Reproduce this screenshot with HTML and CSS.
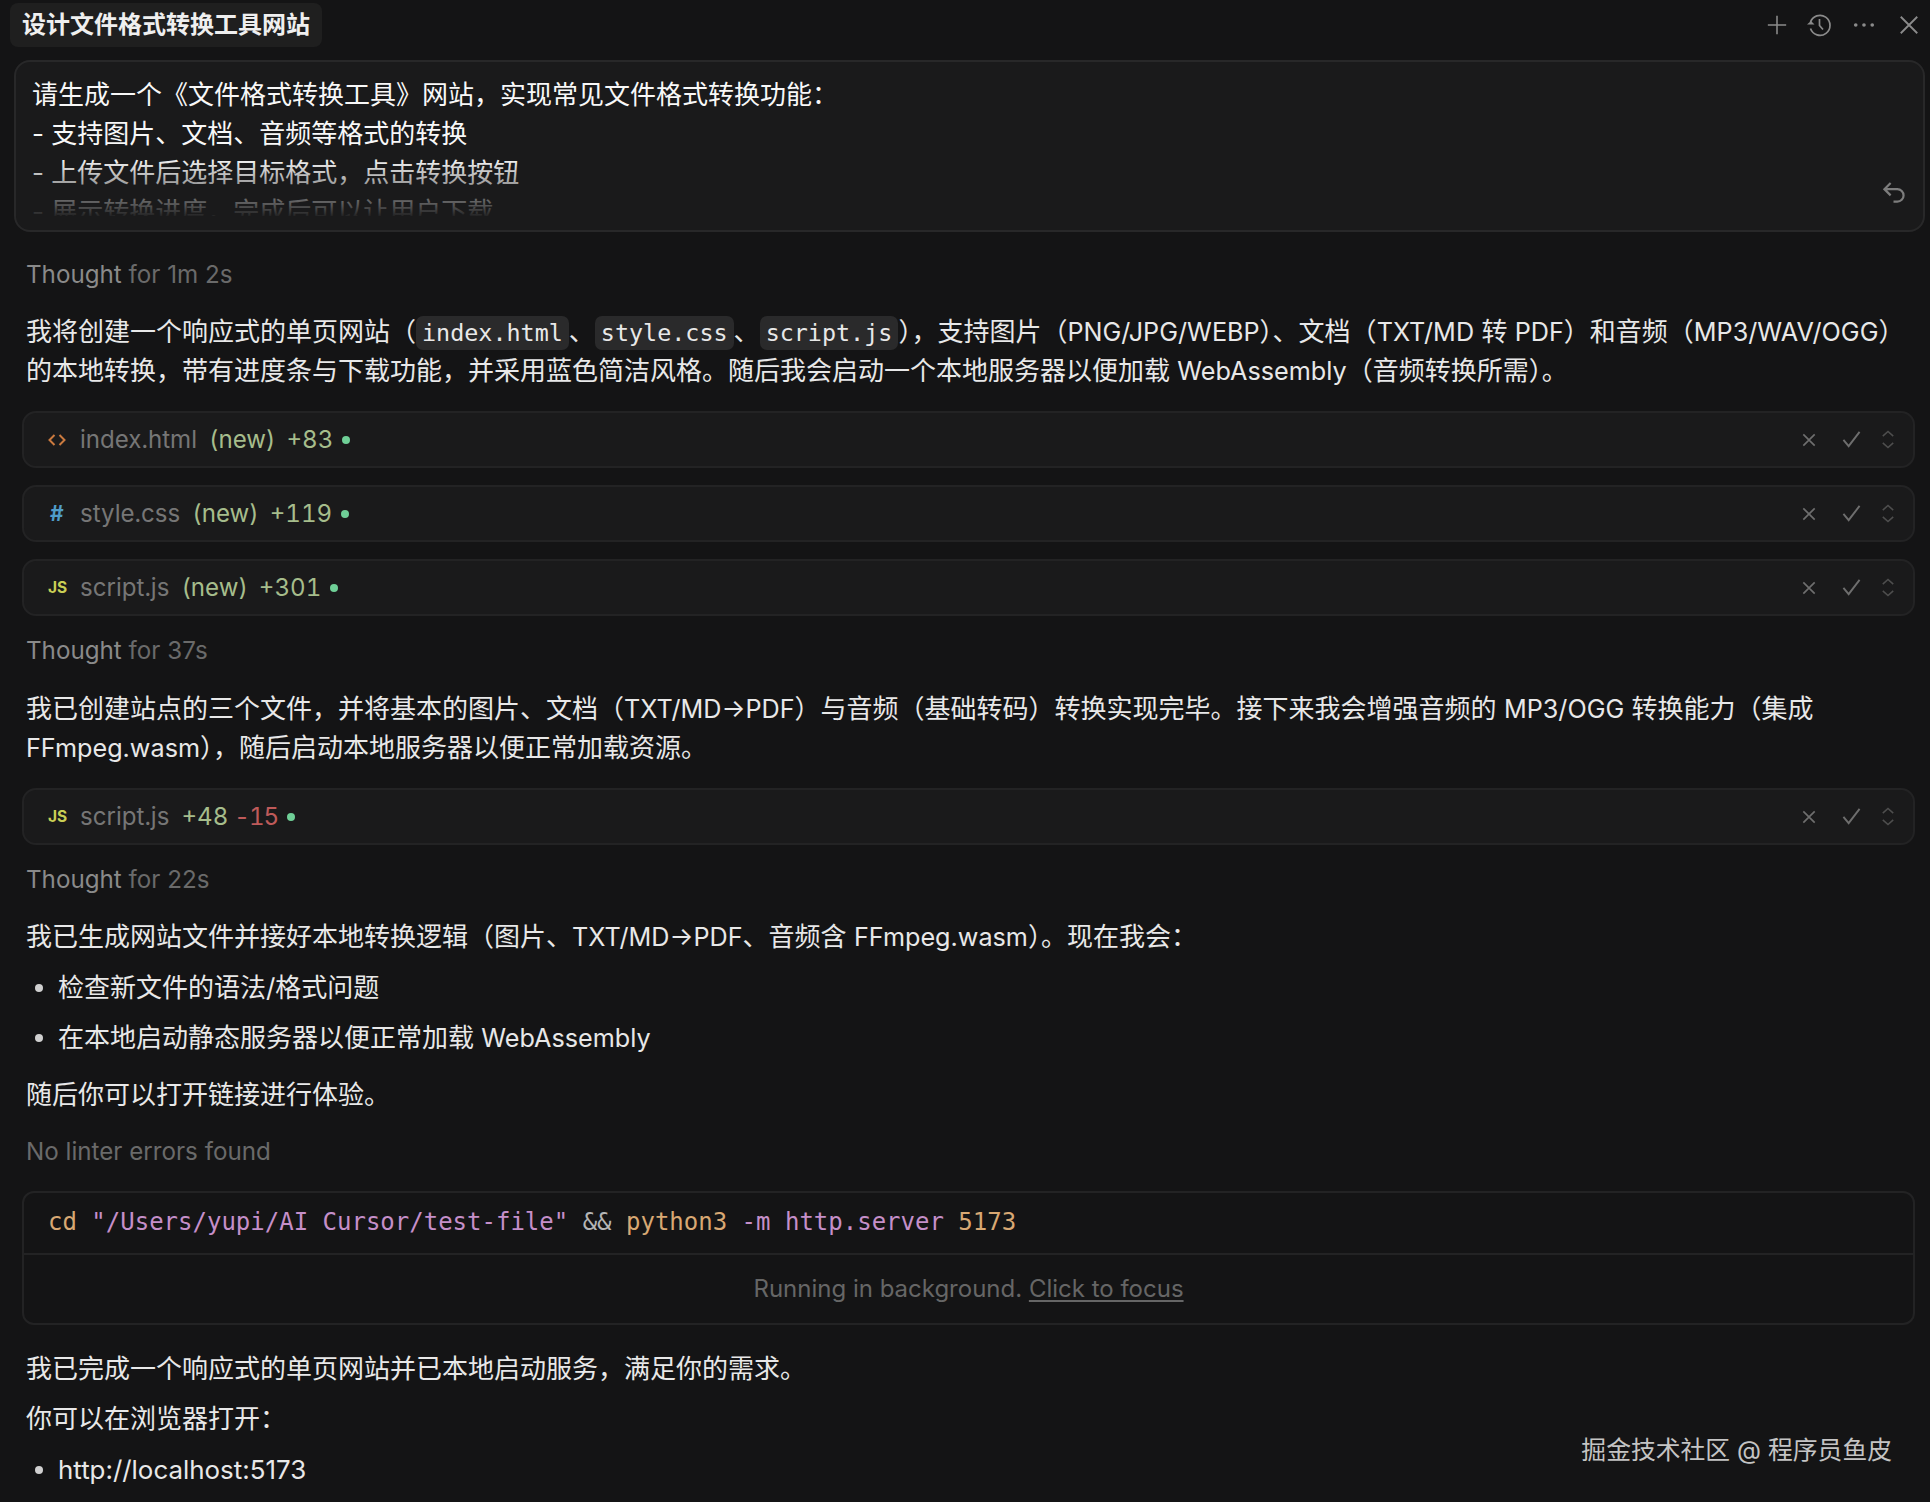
FILE: index.html
```html
<!DOCTYPE html>
<html lang="zh-CN">
<head>
<meta charset="utf-8">
<title>设计文件格式转换工具网站</title>
<link rel="stylesheet" href="styles.css">
</head>
<body>
<svg class="defs" width="0" height="0" aria-hidden="true">
  <symbol id="row-x" viewBox="0 0 16 16"><path d="M1.5 1.5 14.5 14.5M14.5 1.5 1.5 14.5" fill="none" stroke="currentColor" stroke-width="1.9"/></symbol>
  <symbol id="row-check" viewBox="0 0 20 20"><path d="M1.5 10.5 7 17 18.5 2" fill="none" stroke="currentColor" stroke-width="2"/></symbol>
  <symbol id="row-updown" viewBox="0 0 14 20"><path d="M1.5 6.5 7 1.5 12.5 6.5M1.5 13.5 7 18.5 12.5 13.5" fill="none" stroke="currentColor" stroke-width="1.6"/></symbol>
</svg>
<main class="panel">
  <header class="topbar">
    <div class="title">设计文件格式转换工具网站</div>
    <div class="actions">
      <svg class="ic" viewBox="0 0 24 24"><path d="M12 2v20M2 12h20" fill="none" stroke="currentColor" stroke-width="1.7"/></svg>
      <svg class="ic ic-hist" viewBox="0 0 24 24"><path d="M3.4 9.5A10 10 0 1 1 3.5 15.5" fill="none" stroke="currentColor" stroke-width="1.7"/><path d="M0 11.5 4 8l3.5 3.5z" fill="currentColor"/><path d="M12.5 6v6.5l3.5 4" fill="none" stroke="currentColor" stroke-width="1.7"/></svg>
      <svg class="ic" viewBox="0 0 24 24"><circle cx="3" cy="12" r="2" fill="currentColor"/><circle cx="12" cy="12" r="2" fill="currentColor"/><circle cx="21" cy="12" r="2" fill="currentColor"/></svg>
      <svg class="ic ic-close" viewBox="0 0 24 24"><path d="M3 3l18 18M21 3 3 21" fill="none" stroke="currentColor" stroke-width="2"/></svg>
    </div>
  </header>

  <section class="prompt">
    <div class="prompt-text">
      <div>请生成一个《文件格式转换工具》网站，实现常见文件格式转换功能：</div>
      <div>- 支持图片、文档、音频等格式的转换</div>
      <div>- 上传文件后选择目标格式，点击转换按钮</div>
      <div>- 展示转换进度，完成后可以让用户下载</div>
    </div>
    <svg class="undo" viewBox="0 0 24 24"><path d="M9 2 2.5 8.5 9 15M2.5 8.5H16a6 6 0 0 1 0 13h-4" fill="none" stroke="currentColor" stroke-width="2.3"/></svg>
  </section>

  <p class="muted thought-first"><span class="th">Thought</span> for 1m 2s</p>
  <p class="para">我将创建一个响应式的单页网站（<code>index.html</code>、<code>style.css</code>、<code>script.js</code>），支持图片（<span class="lat">PNG/JPG/WEBP</span>）、文档（<span class="lat">TXT/MD</span> 转 <span class="lat">PDF</span>）和音频（<span class="lat">MP3/WAV/OGG</span>）的本地转换，带有进度条与下载功能，并采用蓝色简洁风格。随后我会启动一个本地服务器以便加载 <span class="lat">WebAssembly</span>（音频转换所需）。</p>

  <div class="files">
    <div class="file">
      <span class="file-ic"><svg class="code-ic" viewBox="0 0 18 14"><path d="M6.5 2 1.5 7l5 5M11.5 2l5 5-5 5" fill="none" stroke="currentColor" stroke-width="2"/></svg></span>
      <span class="name">index.html</span><span class="new">(new)</span><span class="add">+83</span><span class="dot"></span>
      <span class="row-actions"><svg class="ra-x"><use href="#row-x"/></svg><svg class="ra-c"><use href="#row-check"/></svg><svg class="ra-u"><use href="#row-updown"/></svg></span>
    </div>
    <div class="file">
      <span class="file-ic hash">#</span>
      <span class="name">style.css</span><span class="new">(new)</span><span class="add">+119</span><span class="dot"></span>
      <span class="row-actions"><svg class="ra-x"><use href="#row-x"/></svg><svg class="ra-c"><use href="#row-check"/></svg><svg class="ra-u"><use href="#row-updown"/></svg></span>
    </div>
    <div class="file">
      <span class="file-ic js">JS</span>
      <span class="name">script.js</span><span class="new">(new)</span><span class="add">+301</span><span class="dot"></span>
      <span class="row-actions"><svg class="ra-x"><use href="#row-x"/></svg><svg class="ra-c"><use href="#row-check"/></svg><svg class="ra-u"><use href="#row-updown"/></svg></span>
    </div>
  </div>

  <p class="muted thought"><span class="th">Thought</span> for 37s</p>
  <p class="para">我已创建站点的三个文件，并将基本的图片、文档（<span class="lat">TXT/MD→PDF</span>）与音频（基础转码）转换实现完毕。接下来我会增强音频的 <span class="lat">MP3/OGG</span> 转换能力（集成 <span class="lat">FFmpeg.wasm</span>），随后启动本地服务器以便正常加载资源。</p>

  <div class="files">
    <div class="file">
      <span class="file-ic js">JS</span>
      <span class="name">script.js</span><span class="add">+48</span><span class="del">-15</span><span class="dot"></span>
      <span class="row-actions"><svg class="ra-x"><use href="#row-x"/></svg><svg class="ra-c"><use href="#row-check"/></svg><svg class="ra-u"><use href="#row-updown"/></svg></span>
    </div>
  </div>

  <p class="muted thought thought-last"><span class="th">Thought</span> for 22s</p>
  <p class="para">我已生成网站文件并接好本地转换逻辑（图片、<span class="lat">TXT/MD→PDF</span>、音频含 <span class="lat">FFmpeg.wasm</span>）。现在我会：</p>
  <ul class="list">
    <li>检查新文件的语法/格式问题</li>
    <li>在本地启动静态服务器以便正常加载 <span class="lat">WebAssembly</span></li>
  </ul>
  <p class="para after-list">随后你可以打开链接进行体验。</p>
  <p class="muted linter">No linter errors found</p>

  <section class="term">
    <div class="cmd"><span class="t-o">cd</span> <span class="t-p">"/Users/yupi/AI Cursor/test-file"</span> <span class="t-g">&amp;&amp;</span> <span class="t-o">python3</span> <span class="t-p">-m http.server</span> <span class="t-o">5173</span></div>
    <div class="run">Running in background. <span class="focus">Click to focus</span></div>
  </section>

  <p class="para done">我已完成一个响应式的单页网站并已本地启动服务，满足你的需求。</p>
  <p class="para open">你可以在浏览器打开：</p>
  <ul class="list last">
    <li class="url">http://localhost:5173</li>
  </ul>
  <div class="watermark">掘金技术社区 @ 程序员鱼皮</div>
</main>
</body>
</html>
```
FILE: styles.css
```css
* { box-sizing: border-box; }
html, body { margin: 0; height: 100%; }
body {
  background: #141415;
  color: #e8e8e8;
  font-family: Inter, "Noto Sans CJK SC", sans-serif;
  font-size: 26px;
  line-height: 39px;
  overflow: hidden;
}
.defs { position: absolute; }
.panel { position: relative; height: 1502px; overflow: hidden; display: flex; flex-direction: column; }
.lat { font-size: 25.2px; line-height: 1; }
.url { font-size: 25.9px; }

.topbar { display: flex; justify-content: space-between; align-items: flex-start; height: 60px; padding: 3px 10px 0 10px; }
.title { background: #1f1f1f; border-radius: 8px; height: 44px; padding: 0 12px; font-size: 24px; font-weight: 700; line-height: 44px; color: #efefef; }
.actions { display: flex; align-items: center; gap: 20px; height: 44px; color: #8b8b8b; }
.ic { width: 22px; height: 22px; display: block; }
.ic-hist { width: 24px; height: 24px; margin: 0 2px 0 -1px; }
.ic-close { margin-left: 3px; }

.prompt { position: relative; flex: none; height: 172px; margin: 0 5px 0 14px; padding: 13px 16px 0; background: #1a1a1b; border: 2px solid #282829; border-radius: 16px; overflow: hidden; line-height: 39px; color: #f8f8f8; }
.prompt-text { height: 141px; overflow: hidden; }
.prompt::after { content: ""; position: absolute; left: 0; right: 0; top: 96px; height: 60px; background: linear-gradient(to bottom, rgba(26,26,27,0), rgba(26,26,27,.75) 80%, #1a1a1b); }
.undo { position: absolute; z-index: 1; right: 18px; bottom: 26px; width: 23px; height: 23px; color: #7d7d7d; }

p { margin: 0; }
.para { padding: 0 24px 0 26px; }
.muted { padding-left: 26px; color: #6a6a6a; line-height: 40px; font-size: 24.2px; }
.th { color: #8a8a8a; }
.thought-first { margin-top: 23px; }
.thought-first + .para { margin-top: 17px; }
.thought { margin-top: 15px; }
.thought + .para { margin-top: 18px; }
.thought-last + .para { margin-top: 17px; }

code { font-family: "DejaVu Sans Mono", monospace; font-size: 23.4px; line-height: 1; background: #2a2a2b; border-radius: 7px; padding: 3px 6px; color: #e8e8e8; }

.files { display: flex; flex-direction: column; gap: 17px; margin: 21px 15px 0 22px; }
.file { display: flex; align-items: center; height: 57px; background: #1a1a1b; border: 2px solid #232324; border-radius: 14px; color: #767676; font-size: 24.1px; font-variant-numeric: tabular-nums; }
.file-ic { width: 56px; padding-left: 24px; flex: none; line-height: 1; font-weight: 700; }
.code-ic { display: block; width: 18px; height: 14px; color: #cb7a3f; }
.hash { color: #4f9cc9; font-size: 21px; padding-left: 26px; }
.js { color: #c9cf55; font-size: 15.5px; }
.name { margin-right: 12px; }
.new { color: #a6bd8c; margin-right: 11px; }
.add { color: #a6bd8c; margin-right: 9px; }
.del { color: #bf5a5a; margin-right: 9px; margin-left: -3px; letter-spacing: -1px; }
.dot { width: 8px; height: 8px; border-radius: 50%; background: #6fcf97; }
.row-actions { margin-left: auto; display: flex; align-items: center; color: #6e6e6e; padding-right: 18px; }
.ra-x { width: 14px; height: 14px; }
.ra-c { width: 19px; height: 19px; margin-left: 26px; }
.ra-u { width: 14px; height: 19px; margin-left: 20px; color: #4e4e4e; }

.list { list-style: none; margin: 0; padding: 0 0 0 32px; }
.list li { position: relative; padding-left: 26px; height: 40px; margin-top: 10px; }
.list li:first-child { margin-top: 12px; }
.list li::before { content: ""; position: absolute; left: 3px; top: 16px; width: 8px; height: 8px; border-radius: 50%; background: #d0d0d0; }
.after-list { margin-top: 17px; }
.linter { margin-top: 18px; }

.term { flex: none; height: 134px; margin: 19px 15px 0 22px; border: 2px solid #232324; border-radius: 12px; }
.cmd { height: 62px; padding-left: 24px; border-bottom: 2px solid #232324; font-family: "DejaVu Sans Mono", monospace; font-size: 24px; line-height: 58px; white-space: pre; }
.t-o { color: #d8a873; }
.t-p { color: #c58fc9; }
.t-g { color: #b5b5b5; }
.run { text-align: center; color: #666; line-height: 67px; font-size: 24px; }
.focus { text-decoration: underline; text-underline-offset: 3px; }

.done { margin-top: 24px; }
.open { margin-top: 11px; }
.last li:first-child { margin-top: 12px; }

.watermark { position: absolute; right: 38px; top: 1431px; color: #c4c4c4; font-size: 24.8px; }
```
